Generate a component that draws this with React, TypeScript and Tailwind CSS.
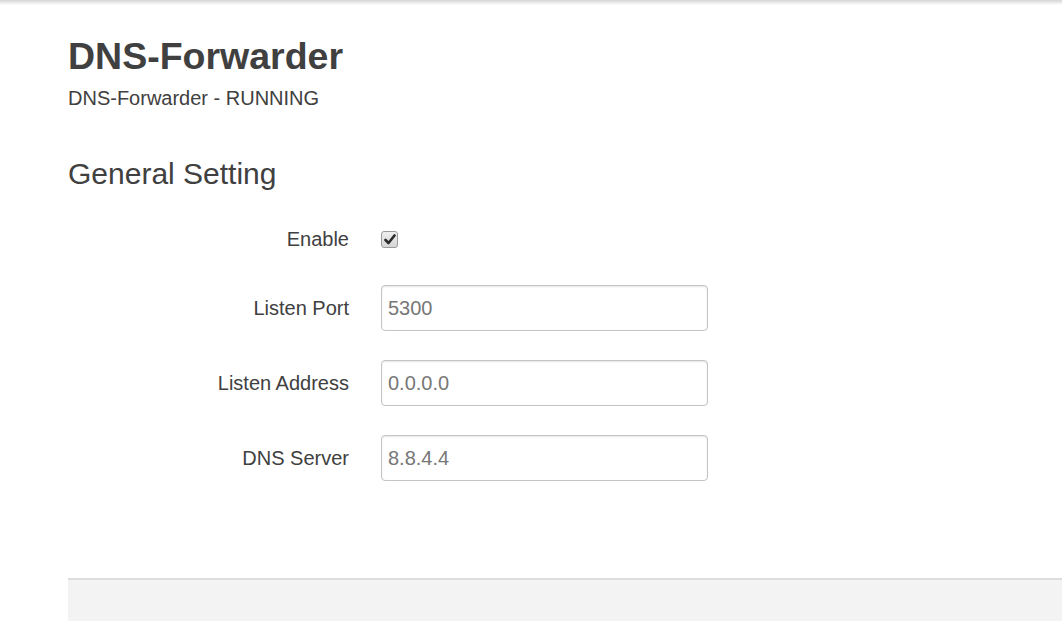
import React from "react";

function Row({ label, children, className = "" }: { label: string; children: React.ReactNode; className?: string }) {
  return (
    <div className={"flex items-center " + className}>
      <div className="w-[281px] shrink-0 text-right text-[20px] leading-[28px] text-[#404040]">{label}</div>
      <div className="ml-[32px] flex items-center">{children}</div>
    </div>
  );
}

function Field({ value }: { value: string }) {
  return (
    <div className="flex h-[46px] w-[327px] items-center rounded-[4px] border border-[#c4c4c4] bg-white px-[6px] text-[20px] text-[#777777] shadow-[inset_0_1px_2px_rgba(0,0,0,0.1)]">
      {value}
    </div>
  );
}

export default function App() {
  return (
    <div className="relative min-h-[621px] w-[1062px] overflow-hidden bg-white font-[Liberation_Sans,Arial,sans-serif] text-[#404040]">
      <div className="h-[5px] w-full bg-gradient-to-b from-[#d4d4d4] to-white" />
      <div className="pl-[68px]">
        <h1 className="mt-[31px] text-[37.5px] font-bold leading-[41px] text-[#404040]">DNS-Forwarder</h1>
        <div className="mt-[7px] text-[20px] leading-[28px] text-[#404040]">DNS-Forwarder - RUNNING</div>
        <h3 className="mt-[45px] text-[30px] leading-[33px] text-[#404040]">General Setting</h3>

        <Row label="Enable" className="mt-[35px] h-[28px]">
          <div className="flex h-[17px] w-[17px] items-center justify-center rounded-[3px] border border-[#9a9a9a] bg-gradient-to-b from-[#eeeeee] to-[#d6d6d6]">
            <svg width="12" height="11" viewBox="0 0 12 11">
              <path d="M1.5 6 L4.5 9 L10.5 1.5" fill="none" stroke="#2a2a2a" strokeWidth="2.6" strokeLinecap="round" strokeLinejoin="round" />
            </svg>
          </div>
        </Row>

        <Row label="Listen Port" className="mt-[32px]">
          <Field value="5300" />
        </Row>
        <Row label="Listen Address" className="mt-[29px]">
          <Field value="0.0.0.0" />
        </Row>
        <Row label="DNS Server" className="mt-[29px]">
          <Field value="8.8.4.4" />
        </Row>

        <div className="mt-[97px] h-[45px] border-t-2 border-[#dddddd] bg-[#f3f3f3]" />
      </div>
    </div>
  );
}
